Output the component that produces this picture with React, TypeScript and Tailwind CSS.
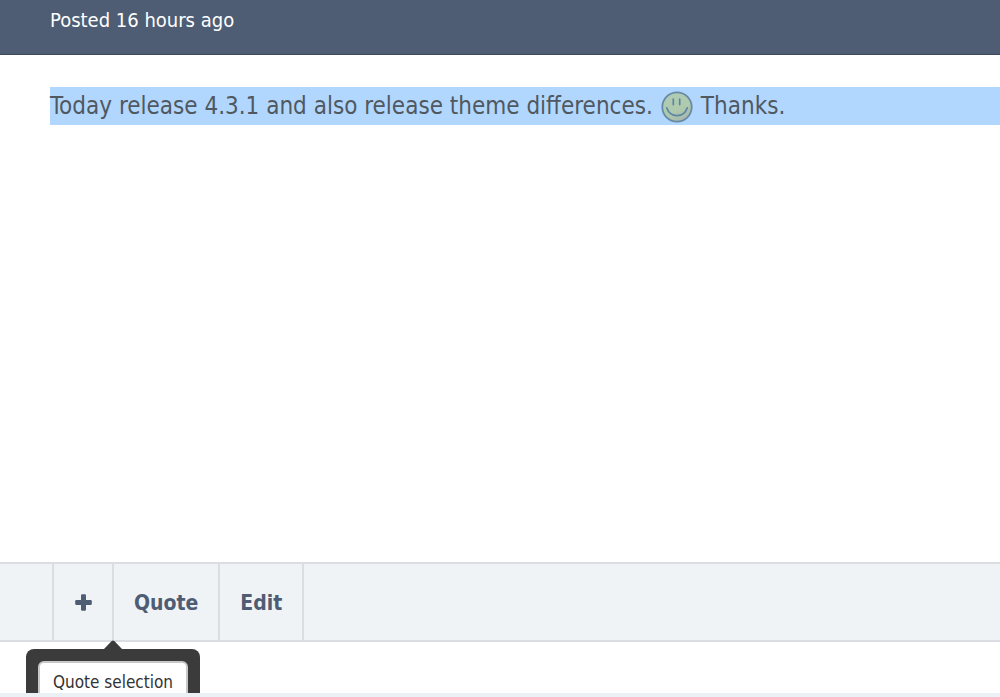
function PlusIcon() {
  return (
    <svg viewBox="0 0 17 17" className="h-[17px] w-[17px]" fill="currentColor" aria-hidden="true">
      <rect x="0.2" y="6" width="16.6" height="5" rx="1.2" />
      <rect x="6" y="0.2" width="5" height="16.6" rx="1.2" />
    </svg>
  );
}

function Smile() {
  return (
    <svg viewBox="0 0 32 32" className="h-8 w-8 shrink-0" role="img" aria-label=":)">
      <defs>
        <linearGradient id="smile-face" x1="0.2" y1="0" x2="0.7" y2="1">
          <stop offset="0" stopColor="#b0cbb6" />
          <stop offset="0.6" stopColor="#afcaad" />
          <stop offset="1" stopColor="#a8b6ad" />
        </linearGradient>
      </defs>
      <circle cx="16" cy="16" r="14.7" fill="url(#smile-face)" stroke="#688ba5" strokeWidth="1.8" />
      <g fill="none" stroke="#5b86a4" strokeWidth="1.7" strokeLinecap="round">
        <path d="M12.3 8.2v5.4M18.7 8.2v5.4" />
        <path d="M5.7 16.8c1.7 5 5.9 7.9 10.3 7.9s8.6-2.9 10.3-7.9" />
      </g>
    </svg>
  );
}

const actions: string[] = ["Quote", "Edit"];

function App() {
  return (
    <div className="flex min-h-screen flex-col overflow-hidden bg-white font-['DejaVu_Sans_Condensed','DejaVu_Sans',sans-serif]">
      <header className="h-[55px] border-b border-[#3c4a5c] bg-[#4e5d73] pl-[50px] text-xl leading-10 text-white">
        Posted 16 hours ago
      </header>

      <main className="flex-1 pt-8 pl-[50px]">
        <p className="flex h-[38px] items-center bg-[#b2d7ff] text-2xl text-[#505860]">
          Today release 4.3.1 and also release theme differences.
          <span className="mx-2 flex pt-0.5">
            <Smile />
          </span>
          Thanks.
        </p>
      </main>

      <div className="flex h-20 border-y-2 border-[#dadee2] bg-[#eff3f6] pl-[52px] text-[21px] font-bold text-[#4e5d73]">
        <button
          type="button"
          aria-label="Multi-quote"
          className="flex w-[62px] items-center justify-center border-x-2 border-[#dadee2]"
        >
          <PlusIcon />
        </button>
        {actions.map((item) => (
          <button key={item} type="button" className="border-r-2 border-[#dadee2] px-5 pt-1">
            {item}
          </button>
        ))}
      </div>

      <div className="relative h-[51px]">
        <div className="absolute inset-x-0 -top-0.5 bottom-0 overflow-hidden">
          <div className="ml-[26px] flex w-[174px] flex-col items-center">
            <svg viewBox="0 0 18 9" className="h-[9px] w-[18px]" fill="#3b3b3b" aria-hidden="true">
              <path d="M0 9 7.5 1.3q1.5-1.5 3 0L18 9z" />
            </svg>
            <div className="w-full rounded-lg bg-[#3b3b3b] p-3">
              <button
                type="button"
                className="h-10 w-full rounded-md border-2 border-[#c8c8c8] bg-white pt-1 text-[17px] text-[#333]"
              >
                Quote selection
              </button>
            </div>
          </div>
        </div>
      </div>
      <footer className="h-1 bg-[#ebf0f4]" />
    </div>
  );
}

export default App;
